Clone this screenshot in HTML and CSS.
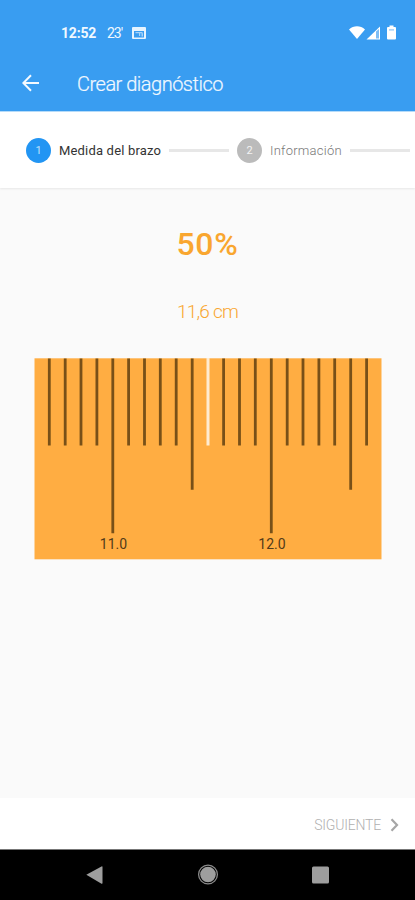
FILE: index.html
```
<!DOCTYPE html>
<html lang="es">
<head>
    <meta charset="UTF-8">
    <meta name="viewport" content="width=device-width, initial-scale=1.0">
    <title>Crear diagnóstico</title>
    <link rel="stylesheet" href="styles.css">
</head>
<body>

    <header class="header">
        <div class="status-bar">
            <span class="time">12:52</span>
            <span class="temp">23′</span>
            <svg class="news-icon" width="14" height="12" viewBox="0 0 14 12">
                <path fill="#e6f4ff" fill-rule="evenodd" d="M1 0h12a1 1 0 0 1 1 1v10a1 1 0 0 1-1 1H1a1 1 0 0 1-1-1V1a1 1 0 0 1 1-1zM2 4v6.500h10V4z"/>
                <path fill="#a5d2f9" d="M3.500 5h7v1.200h-7zM7 6.200h1.200V9H7zM9.500 6.200h1.500V9.500H9.500z"/>
            </svg>
            <div class="status-right">
                <svg width="48" height="16" viewBox="0 0 48 16" fill="#fff">
                    <path d="M0 4.500C4.500 .3 11.500 .3 16 4.500L8 14z"/>
                    <path d="M17.500 14.500 31 1.500v13z"/>
                    <path fill="#7dbdf5" d="M27 6.500 30 4v9.500h-3z"/>
                    <path d="M40.500 .5h4V2H46a1 1 0 0 1 1 1v10.500a1 1 0 0 1-1 1h-7a1 1 0 0 1-1-1V3a1 1 0 0 1 1-1h1.500z"/>
                    <path fill="#8cc4f6" d="M40 4.300h5v1.200h-5z"/>
                </svg>
            </div>
        </div>
        <div class="app-bar">
            <svg width="18" height="18" viewBox="0 0 18 18" fill="none" stroke="#f4faff" stroke-width="2">
                <path d="M17 9H1.500M9 1.200 1.300 9 9 16.800"/>
            </svg>
            <h1>Crear diagnóstico</h1>
        </div>
    </header>

    <nav class="stepper">
        <span class="step-number active">1</span>
        <span class="step-label active">Medida del brazo</span>
        <span class="step-line"></span>
        <span class="step-number">2</span>
        <span class="step-label">Información</span>
        <span class="step-line last"></span>
    </nav>

    <main class="content">
        <div class="percent">50%</div>
        <div class="measure">11,6 cm</div>
        <svg class="ruler" width="348" height="202" viewBox="0 0 348 202">
            <rect x=".5" y=".3" width="347" height="201" fill="#ffad42"/>
            <g class="ticks">
                <path d="M15.300 .5V87.500M31.200 .5V87.500M47 .5V87.500M62.900 .5V87.500M94.600 .5V87.500M110.500 .5V87.500M126.300 .5V87.500M142.200 .5V87.500"/>
                <path d="M189.600 .5V87.500M205.500 .5V87.500M221.300 .5V87.500M253.200 .5V87.500M269 .5V87.500M284.900 .5V87.500M300.700 .5V87.500M332.600 .5V87.500"/>
                <path d="M158.200 .5V131.800M316.700 .5V131.800"/>
                <path d="M78.800 .5V175.300M237.300 .5V175.300"/>
            </g>
            <path class="current" d="M174 0V87.500"/>
            <text x="79.500" y="191">11.0</text>
            <text x="238" y="191">12.0</text>
        </svg>
    </main>

    <footer class="bottom-bar">
        <span>SIGUIENTE</span>
        <svg width="9" height="14" viewBox="0 0 9 14" fill="none" stroke="#a6a6a6" stroke-width="2.200">
            <path d="M1.500 1.300 7 7l-5.500 5.700"/>
        </svg>
    </footer>

    <div class="system-nav">
        <svg width="415" height="50" viewBox="0 0 415 50" fill="#9e9e9e">
            <path d="M86.300 24.800 101.500 16.500a.7.7 0 0 1 1 .6v16a.7.7 0 0 1-1 .6z"/>
            <circle cx="208" cy="24.500" r="7.800"/>
            <circle cx="208" cy="24.500" r="9.400" fill="none" stroke="#8a8a8a" stroke-width="1.300"/>
            <rect x="312" y="16.500" width="17" height="17" rx="1.500"/>
        </svg>
    </div>

</body>
</html>
```
FILE: styles.css
```
* { box-sizing: border-box; }
body { margin: 0; height: 900px; display: flex; flex-direction: column; overflow: hidden; background: #fafafa; font-family: Roboto, sans-serif; }
.header { height: 111px; background: #399df1; color: #f0f8ff; }
.status-bar { display: flex; align-items: center; height: 57px; padding: 9px 18px 0 61px; }
.time { width: 46px; font-size: 14px; font-weight: 700; letter-spacing: -0.2px; }
.temp { width: 25px; font-size: 14px; letter-spacing: -1px; white-space: nowrap; }
.news-icon { display: block; margin-bottom: 1px; }
.status-right { margin-left: auto; height: 17px; }
.app-bar { display: flex; align-items: center; height: 51px; padding-left: 22px; }
.app-bar h1 { margin: 2px 0 0 37px; font-size: 20px; font-weight: 300; letter-spacing: -0.5px; -webkit-text-stroke: 0.2px; }
.stepper { display: flex; align-items: center; height: 77px; padding: 0 5px 0 26px; background: #fff; box-shadow: 0 1px 2px rgba(0, 0, 0, 0.08); border-top: 1px solid #b5dbf9; }
.step-number { width: 25px; height: 25px; border-radius: 50%; background: #bbb; color: #f3f3f3; font-size: 11px; line-height: 25px; text-align: center; }
.step-number.active { background: #2295f3; color: #bfe0fc; }
.step-label { width: 72px; margin: 1px 0 0 8px; font-size: 13px; font-weight: 300; letter-spacing: 0.25px; color: #777; white-space: nowrap; }
.step-label.active { width: 102px; font-weight: 400; letter-spacing: 0.18px; color: #333; }
.step-line { width: 60px; height: 3px; margin: 0 8px; background: #e7e7e7; }
.step-line.last { margin-right: 0; }
.content { flex: 1; display: flex; flex-direction: column; align-items: center; color: #f9a62f; }
.percent { margin-top: 36px; font-size: 32px; line-height: 40px; font-weight: 500; letter-spacing: 0.7px; }
.measure { margin-top: 36px; font-size: 19px; line-height: 24px; font-weight: 300; letter-spacing: -0.8px; }
.ruler { margin-top: 34px; }
.ticks path { stroke: #785018; stroke-width: 2.800; }
.ruler .current { stroke: #ffecd2; stroke-width: 3; }
.ruler text { font-size: 14px; text-anchor: middle; fill: #533b19; }
.bottom-bar { display: flex; align-items: center; justify-content: flex-end; gap: 9px; height: 51px; padding: 2px 16px 0 0; background: #fff; color: #b0b0b0; font-size: 14px; font-weight: 300; }
.bottom-bar span { margin-top: 1px; letter-spacing: -0.2px; }
.system-nav { height: 51px; background: #000; border-top: 1px solid #777; }
```
